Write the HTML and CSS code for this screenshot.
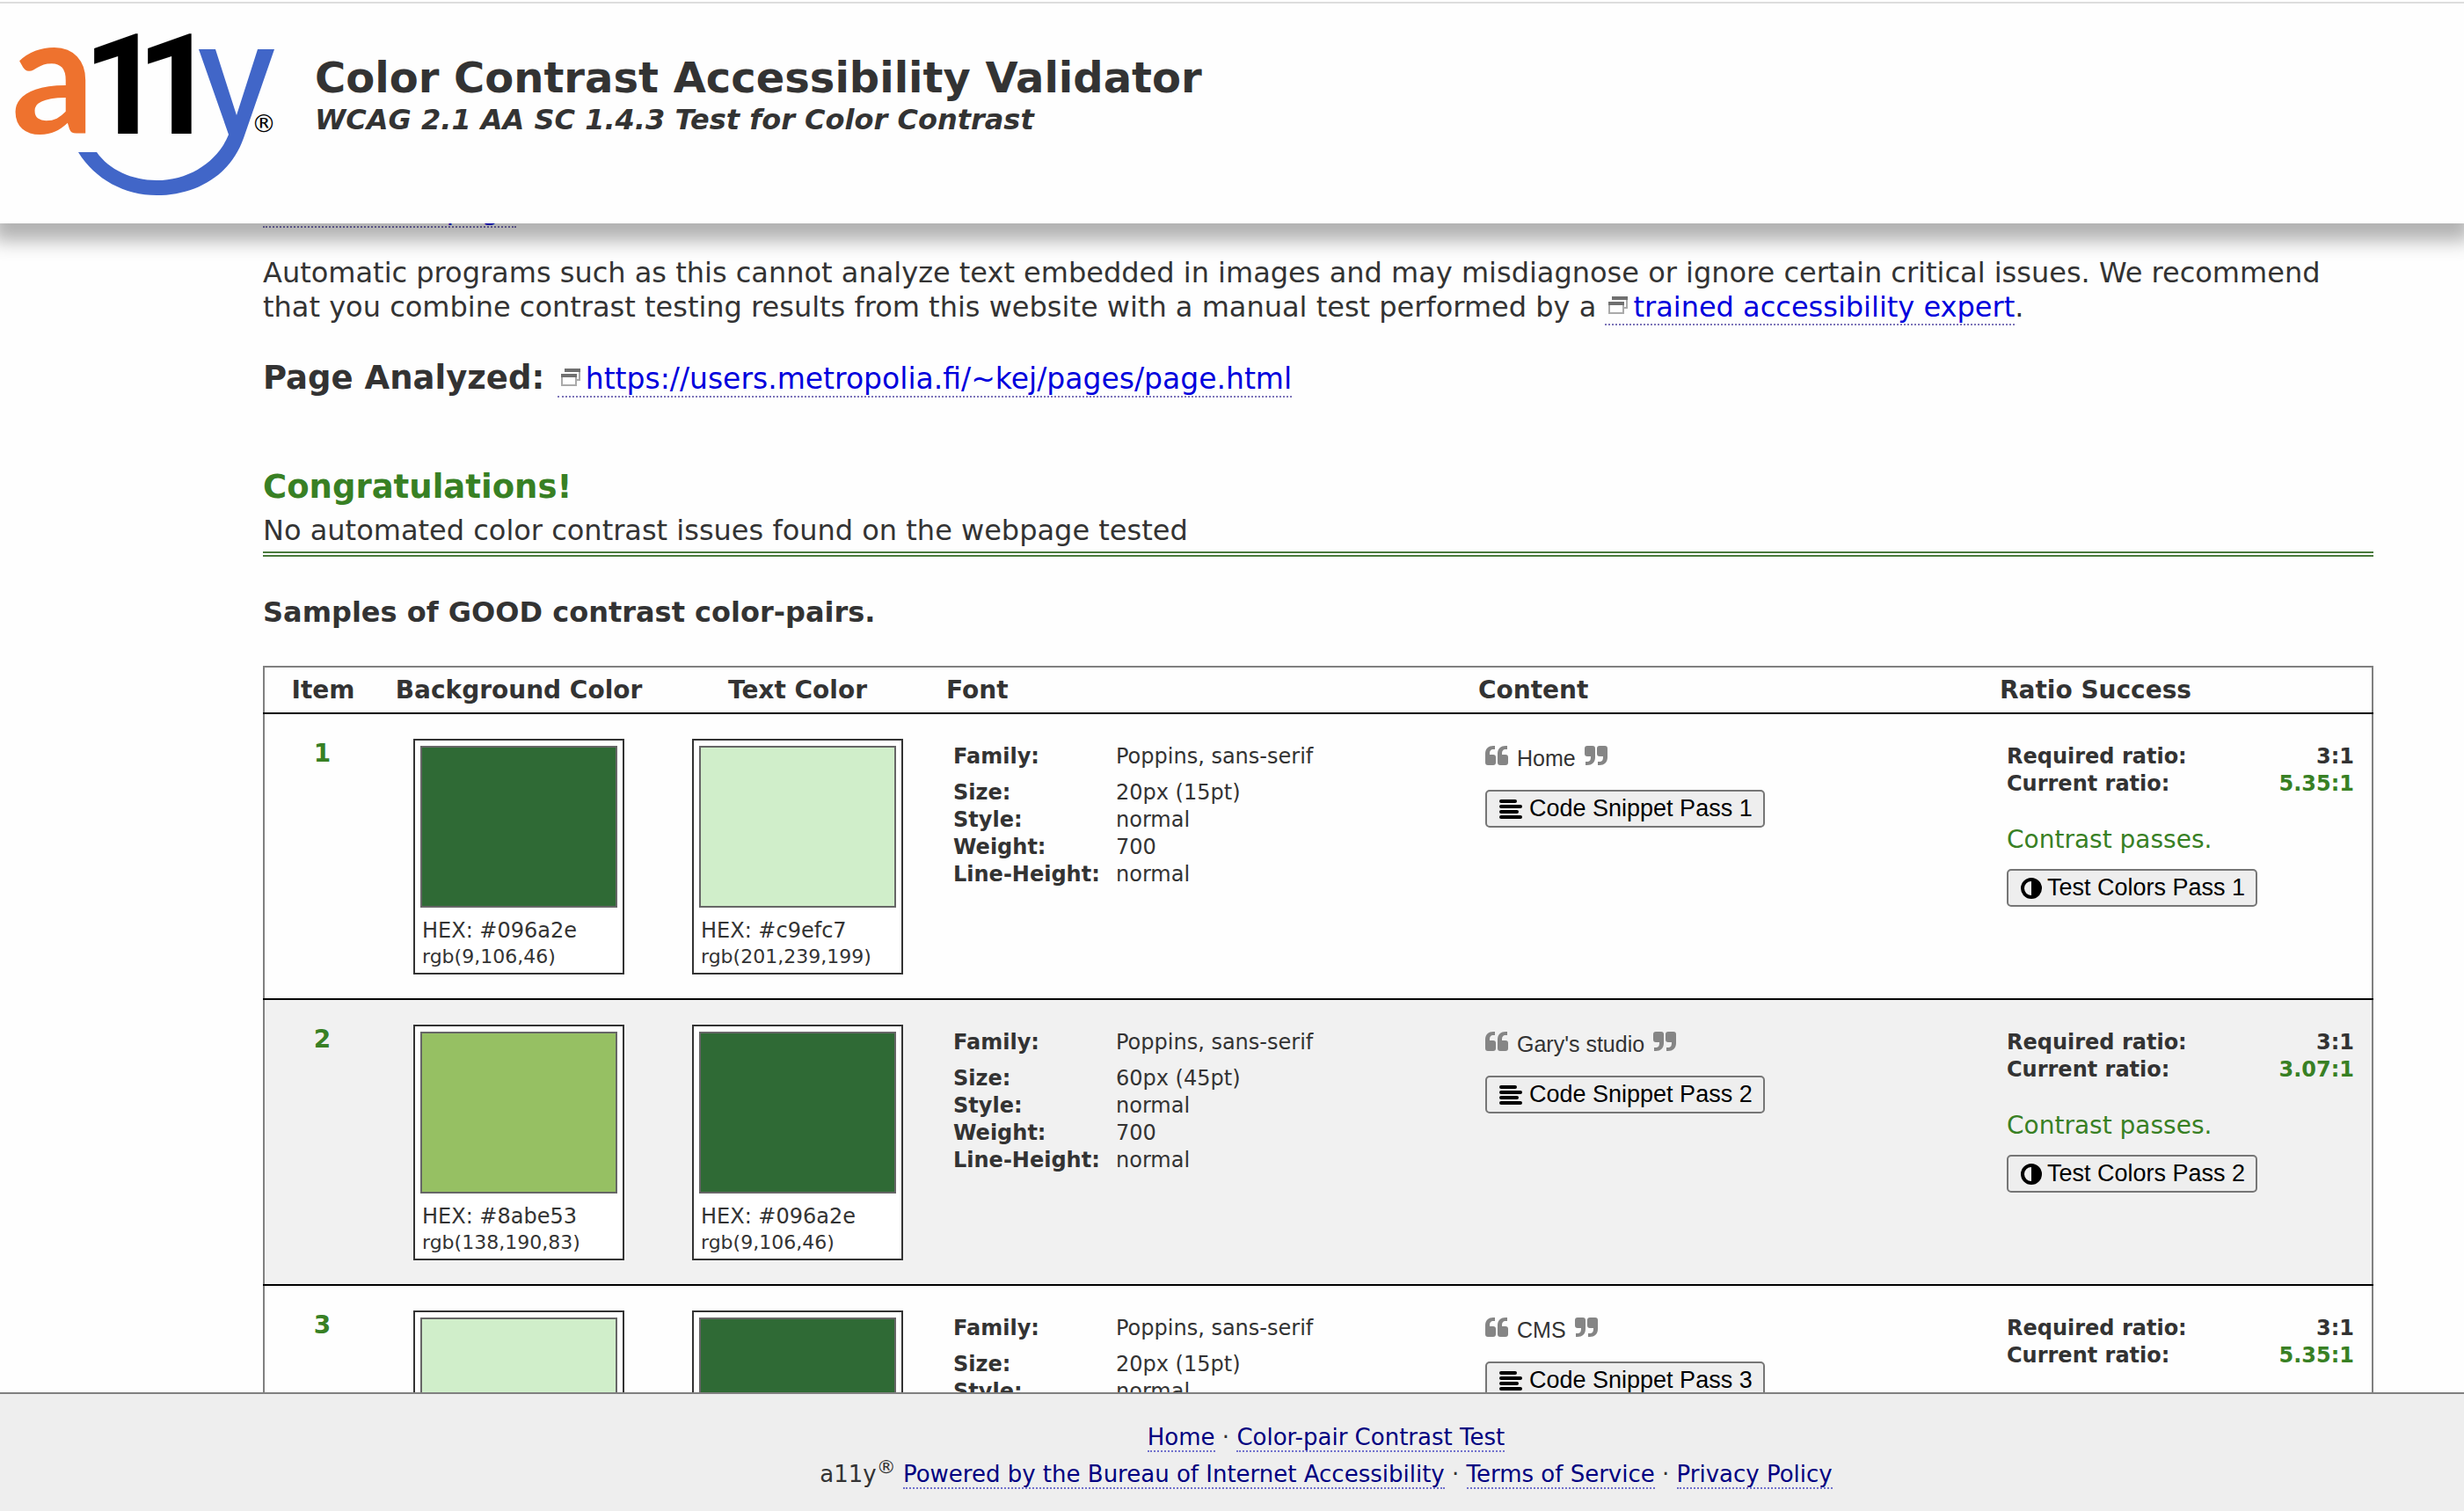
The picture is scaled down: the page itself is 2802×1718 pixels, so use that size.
FILE: index.html
```html
<!DOCTYPE html>
<html lang="en">
<head>
<meta charset="utf-8">
<title>Color Contrast Accessibility Validator</title>
<link rel="stylesheet" href="styles.css">
</head>
<body>
<svg class="sprite" aria-hidden="true">
  <symbol id="popup" viewBox="0 0 22 20">
    <path d="M5 4V1h16v12h-4" fill="none" stroke="#aaa" stroke-width="2"/>
    <path d="M4 0h18v4H4z" fill="#707070"/>
    <path d="M1 8h16v11H1z" fill="#fff" stroke="#aaa" stroke-width="2"/>
    <path d="M0 6h18v4H0z" fill="#707070"/>
  </symbol>
  <symbol id="quote-left" viewBox="0 0 26 22">
    <path id="q" d="M11 0v4H9.500C6 4 5 6 5 9v1h4q3 0 3 3v6q0 3-3 3H3q-3 0-3-3V9C0 3 4 0 9 0zM25 0v4h-1.500C20 4 19 6 19 9v1h4q3 0 3 3v6q0 3-3 3h-6q-3 0-3-3V9C14 3 18 0 23 0z" fill="#858585"/>
  </symbol>
  <symbol id="quote-right" viewBox="0 0 26 22">
    <use href="#q" transform="rotate(180 13 11)"/>
  </symbol>
  <symbol id="lines" viewBox="0 0 26 22">
    <path d="M2 2h16M2 8h22M2 14h18M2 20h22" stroke="#000" stroke-width="4" stroke-linecap="round" fill="none"/>
  </symbol>
  <symbol id="contrast" viewBox="0 0 24 24">
    <circle cx="12" cy="12" r="10" fill="none" stroke="#000" stroke-width="4"/>
    <path d="M12 2a10 10 0 0 1 0 20z"/>
  </symbol>
</svg>

<header class="banner">
  <svg class="logo" viewBox="0 0 320 250" role="img" aria-label="a11y">
    <text class="logo-a" x="13" y="152">a</text>
    <text class="logo-one" x="94" y="152">1</text>
    <text class="logo-one" x="155" y="152">1</text>
    <path d="M226 56h19l24 75 24-75h19l-35 101C262 200 222 222 178 222c-36 0-70-18-89-49h21c14 20 40 32 68 32 38 0 70-22 82-52z" fill="#4166c8"/>
    <text class="logo-mark" x="286" y="150">®</text>
  </svg>
  <div class="heading">
    <h1 class="title">Color Contrast Accessibility Validator</h1>
    <p class="subtitle">WCAG 2.1 AA SC 1.4.3 Test for Color Contrast</p>
  </div>
</header>

<main class="page">
  <div class="content">
    <p class="back"><a class="link" href="#">Test another page</a></p>
    <p class="note">Automatic programs such as this cannot analyze text embedded in images and may misdiagnose or ignore certain critical issues. We recommend that you combine contrast testing results from this website with a manual test performed by a <a class="link external" href="#"><svg class="popup"><use href="#popup"/></svg>trained accessibility expert</a>.</p>
    <p class="analyzed"><strong class="label">Page Analyzed:</strong> <a class="link external" href="#"><svg class="popup"><use href="#popup"/></svg>https://users.metropolia.fi/~kej/pages/page.html</a></p>
    <h2 class="congrats">Congratulations!</h2>
    <p class="verdict">No automated color contrast issues found on the webpage tested</p>
    <h3 class="samples">Samples of GOOD contrast color-pairs.</h3>

    <table class="results">
      <colgroup>
        <col class="col-item"><col class="col-bg"><col class="col-fg"><col class="col-font"><col class="col-content"><col>
      </colgroup>
      <thead>
        <tr>
          <th class="center" scope="col">Item</th>
          <th class="center" scope="col">Background Color</th>
          <th class="center" scope="col">Text Color</th>
          <th scope="col">Font</th>
          <th scope="col">Content</th>
          <th scope="col">Ratio Success</th>
        </tr>
      </thead>
      <tbody>
        <tr>
          <td class="item">1</td>
          <td><div class="card"><div class="swatch dark"></div><p class="hex">HEX: #096a2e</p><p class="rgb">rgb(9,106,46)</p></div></td>
          <td><div class="card"><div class="swatch pale"></div><p class="hex">HEX: #c9efc7</p><p class="rgb">rgb(201,239,199)</p></div></td>
          <td><dl class="font"><dt class="family">Family:</dt><dd class="family">Poppins, sans-serif</dd><dt>Size:</dt><dd>20px (15pt)</dd><dt>Style:</dt><dd>normal</dd><dt>Weight:</dt><dd>700</dd><dt>Line-Height:</dt><dd>normal</dd></dl></td>
          <td>
            <p class="quote"><svg class="mark"><use href="#quote-left"/></svg><span>Home</span><svg class="mark"><use href="#quote-right"/></svg></p>
            <button class="button" type="button"><svg class="mark"><use href="#lines"/></svg>Code Snippet Pass 1</button>
          </td>
          <td>
            <dl class="ratio"><dt>Required ratio:</dt><dd>3:1</dd><dt>Current ratio:</dt><dd class="good">5.35:1</dd></dl>
            <p class="passes">Contrast passes.</p>
            <button class="button test" type="button"><svg class="disc"><use href="#contrast"/></svg>Test Colors Pass 1</button>
          </td>
        </tr>
        <tr>
          <td class="item">2</td>
          <td><div class="card"><div class="swatch lime"></div><p class="hex">HEX: #8abe53</p><p class="rgb">rgb(138,190,83)</p></div></td>
          <td><div class="card"><div class="swatch dark"></div><p class="hex">HEX: #096a2e</p><p class="rgb">rgb(9,106,46)</p></div></td>
          <td><dl class="font"><dt class="family">Family:</dt><dd class="family">Poppins, sans-serif</dd><dt>Size:</dt><dd>60px (45pt)</dd><dt>Style:</dt><dd>normal</dd><dt>Weight:</dt><dd>700</dd><dt>Line-Height:</dt><dd>normal</dd></dl></td>
          <td>
            <p class="quote"><svg class="mark"><use href="#quote-left"/></svg><span>Gary's studio</span><svg class="mark"><use href="#quote-right"/></svg></p>
            <button class="button" type="button"><svg class="mark"><use href="#lines"/></svg>Code Snippet Pass 2</button>
          </td>
          <td>
            <dl class="ratio"><dt>Required ratio:</dt><dd>3:1</dd><dt>Current ratio:</dt><dd class="good">3.07:1</dd></dl>
            <p class="passes">Contrast passes.</p>
            <button class="button test" type="button"><svg class="disc"><use href="#contrast"/></svg>Test Colors Pass 2</button>
          </td>
        </tr>
        <tr>
          <td class="item">3</td>
          <td><div class="card"><div class="swatch pale"></div></div></td>
          <td><div class="card"><div class="swatch dark"></div></div></td>
          <td><dl class="font"><dt class="family">Family:</dt><dd class="family">Poppins, sans-serif</dd><dt>Size:</dt><dd>20px (15pt)</dd><dt>Style:</dt><dd>normal</dd></dl></td>
          <td>
            <p class="quote"><svg class="mark"><use href="#quote-left"/></svg><span>CMS</span><svg class="mark"><use href="#quote-right"/></svg></p>
            <button class="button" type="button"><svg class="mark"><use href="#lines"/></svg>Code Snippet Pass 3</button>
          </td>
          <td>
            <dl class="ratio"><dt>Required ratio:</dt><dd>3:1</dd><dt>Current ratio:</dt><dd class="good">5.35:1</dd></dl>
          </td>
        </tr>
      </tbody>
    </table>
  </div>
</main>

<footer class="footer">
  <p><a class="link" href="#">Home</a> · <a class="link" href="#">Color-pair Contrast Test</a></p>
  <p>a11y<sup class="reg">®</sup> <a class="link" href="#">Powered by the Bureau of Internet Accessibility</a> · <a class="link" href="#">Terms of Service</a> · <a class="link" href="#">Privacy Policy</a></p>
</footer>
</body>
</html>
```

FILE: styles.css
```css
* { box-sizing: border-box; }

body {
  margin: 0;
  height: 100vh;
  display: flex;
  flex-direction: column;
  overflow: hidden;
  background: #fefefe;
  color: #333;
  font: 32px/39px Verdana, "DejaVu Sans", sans-serif;
}

h1, h2, h3, p, dl, dd { margin: 0; }
svg { flex: none; }
.sprite { display: none; }

/* Banner */
.banner {
  position: relative;
  z-index: 1;
  flex: none;
  display: flex;
  gap: 38px;
  background: #fefefe;
  box-shadow: 0 12px 20px 8px rgba(0, 0, 0, 0.3);
}
.banner::before {
  content: "";
  position: absolute;
  top: 2px;
  left: 0;
  right: 0;
  height: 2px;
  background: #ddd;
}
.logo { width: 320px; height: 250px; margin-bottom: 4px; }
.logo-a { font: bold 186px Lato, sans-serif; fill: #ee722e; }
.logo-one { font: bold 160px Roboto, sans-serif; fill: #000; }
.logo-mark { font: 28px "DejaVu Sans", sans-serif; fill: #000; }
.heading { padding-top: 60px; }
.title { font-size: 48px; line-height: 57px; }
.subtitle { font-weight: bold; font-style: italic; }

/* Page */
.page { flex: 1; min-height: 0; overflow: hidden; }
.content { margin: -35px 103px 0 299px; }
.link { color: #00d; text-decoration: none; border-bottom: 2px dotted #7c74b8; }
.external { padding-left: 4px; }
.popup { width: 22px; height: 20px; margin-right: 6px; vertical-align: 3px; }
.note { margin-top: 33px; }
.analyzed { margin-top: 39px; font-size: 33px; line-height: 44px; }
.label { font-size: 37px; margin-right: 4px; }
.congrats { margin-top: 79px; font-size: 37px; line-height: 44px; color: #388024; }
.verdict { margin-top: 8px; padding-bottom: 4px; border-bottom: 6px double #4a7a3c; }
.samples { margin: 44px 0 41px; font-size: 32px; }

/* Results */
.results {
  width: 100%;
  table-layout: fixed;
  border-collapse: collapse;
  border: 2px solid #808080;
  font-size: 24px;
  line-height: 31px;
}
.col-item { width: 134px; }
.col-bg { width: 312px; }
.col-fg { width: 322px; }
.col-font { width: 605px; }
.col-content { width: 593px; }
.results th { padding: 9px 8px; font-size: 28px; line-height: 33px; text-align: left; }
.results .center { text-align: center; }
.results tbody tr { border-top: 2px solid #000; }
.results tbody tr:nth-child(even) { background: #f1f1f1; }
.results td { padding: 28px 20px 27px 16px; vertical-align: top; }
.results .item { padding-left: 18px; font-size: 28px; line-height: 34px; font-weight: bold; text-align: center; color: #388024; }
.card { width: 240px; height: 268px; margin: 0 auto; padding: 6px; border: 2px solid #333; background: #fff; }
.results td:nth-child(2), .results td:nth-child(3) { padding-left: 20px; }
.swatch { height: 184px; margin-bottom: 11px; border: 2px solid #666; }
.dark { background: #2f6a35; }
.pale { background: #d0eeca; }
.lime { background: #96c063; }
.hex, .rgb { padding-left: 2px; line-height: 30px; }
.rgb { font-size: 22px; }
.font { display: grid; grid-template-columns: 185px 1fr; padding-top: 5px; }
.font dt, .ratio { font-weight: bold; }
.family { margin-bottom: 10px; }
.quote { display: flex; gap: 10px; padding-top: 8px; font-family: Arial, "Liberation Sans", sans-serif; font-size: 25px; line-height: 28px; }
.mark { width: 26px; height: 22px; }
.disc { width: 24px; height: 24px; }
.button {
  display: flex;
  align-items: center;
  gap: 8px;
  height: 43px;
  padding: 0 12px 0 14px;
  border: 2px solid #767676;
  border-radius: 5px;
  background: #eee;
  color: #000;
  font: 27px Arial, "Liberation Sans", sans-serif;
}
.test { gap: 6px; }
.quote + .button { margin-top: 22px; }
.ratio { display: grid; grid-template-columns: 1fr auto; padding-top: 5px; }
.ratio dd { text-align: right; }
.good, .passes { color: #388024; }
.passes { margin: 31px 0 16px; font-size: 28px; line-height: 34px; }

/* Footer */
.footer {
  flex: none;
  padding: 28px 0 21px 214px;
  border-top: 2px solid #808080;
  background: #eee;
  font-size: 26px;
  line-height: 42px;
  text-align: center;
}
.footer .link { color: #000080; border-bottom-color: #7070cc; }
.reg { font-size: 22px; line-height: 0; }
```
